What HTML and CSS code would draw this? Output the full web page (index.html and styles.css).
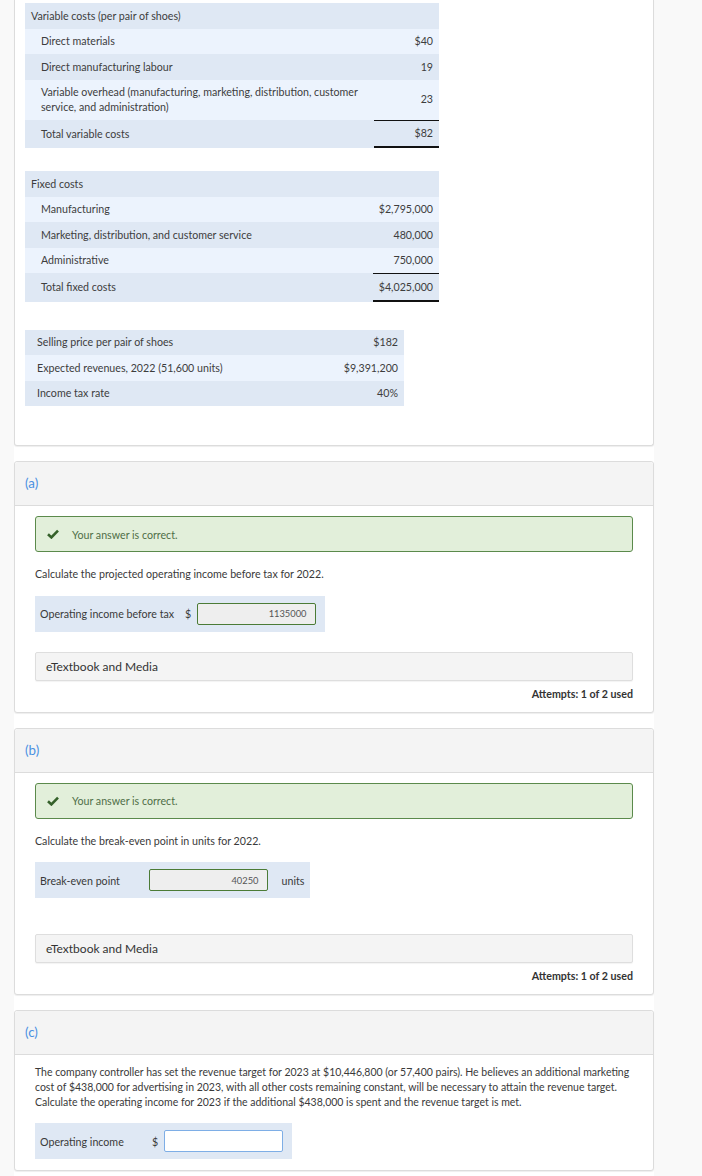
FILE: index.html
```html
<!DOCTYPE html>
<html lang="en">
<head>
<meta charset="utf-8">
<title>Cost-volume-profit question</title>
<link rel="stylesheet" href="styles.css">
</head>
<body>
<div class="column">
  <div class="card card-top">
    <table class="data t-var">
      <tr class="dark"><td class="head" colspan="2">Variable costs (per pair of shoes)</td></tr>
      <tr class="light"><td class="lbl">Direct materials</td><td class="val">$40</td></tr>
      <tr class="dark"><td class="lbl">Direct manufacturing labour</td><td class="val">19</td></tr>
      <tr class="light"><td class="lbl">Variable overhead (manufacturing, marketing, distribution, customer service, and administration)</td><td class="val">23</td></tr>
      <tr class="dark"><td class="lbl">Total variable costs</td><td class="val total">$82</td></tr>
    </table>

    <table class="data t-fixed">
      <tr class="dark"><td class="head" colspan="2">Fixed costs</td></tr>
      <tr class="light"><td class="lbl">Manufacturing</td><td class="val">$2,795,000</td></tr>
      <tr class="dark"><td class="lbl">Marketing, distribution, and customer service</td><td class="val">480,000</td></tr>
      <tr class="light"><td class="lbl">Administrative</td><td class="val">750,000</td></tr>
      <tr class="dark"><td class="lbl">Total fixed costs</td><td class="val total">$4,025,000</td></tr>
    </table>

    <table class="data t-info">
      <tr class="dark"><td class="lbl">Selling price per pair of shoes</td><td class="val">$182</td></tr>
      <tr class="light"><td class="lbl">Expected revenues, 2022 (51,600 units)</td><td class="val">$9,391,200</td></tr>
      <tr class="dark"><td class="lbl">Income tax rate</td><td class="val">40%</td></tr>
    </table>
  </div>

  <section class="card part">
    <div class="part-head">(a)</div>
    <div class="part-body">
      <div class="alert">
        <svg class="check" width="12" height="10" viewBox="0 0 12 10"><path d="M1 5.2 L4.4 8.4 L11 1.6" fill="none" stroke="#35612a" stroke-width="2.6" stroke-linejoin="miter"/></svg>
        <span>Your answer is correct.</span>
      </div>
      <p class="q">Calculate the projected operating income before tax for 2022.</p>
      <div class="answer">
        <span class="a-lbl w-a">Operating income before tax</span>
        <span class="cur">$</span>
        <input class="field done" type="text" value="1135000" readonly>
      </div>
      <div class="media">eTextbook and Media</div>
      <div class="attempts">Attempts: 1 of 2 used</div>
    </div>
  </section>

  <section class="card part">
    <div class="part-head">(b)</div>
    <div class="part-body">
      <div class="alert">
        <svg class="check" width="12" height="10" viewBox="0 0 12 10"><path d="M1 5.2 L4.4 8.4 L11 1.6" fill="none" stroke="#35612a" stroke-width="2.6" stroke-linejoin="miter"/></svg>
        <span>Your answer is correct.</span>
      </div>
      <p class="q">Calculate the break-even point in units for 2022.</p>
      <div class="answer">
        <span class="a-lbl w-b">Break-even point</span>
        <input class="field done" type="text" value="40250" readonly>
        <span class="unit">units</span>
      </div>
      <div class="media media-far">eTextbook and Media</div>
      <div class="attempts">Attempts: 1 of 2 used</div>
    </div>
  </section>

  <section class="card part">
    <div class="part-head">(c)</div>
    <div class="part-body">
      <p class="q para">The company controller has set the revenue target for 2023 at $10,446,800 (or 57,400 pairs). He believes an additional marketing cost of $438,000 for advertising in 2023, with all other costs remaining constant, will be necessary to attain the revenue target. Calculate the operating income for 2023 if the additional $438,000 is spent and the revenue target is met.</p>
      <div class="answer">
        <span class="a-lbl w-c">Operating income</span>
        <span class="cur">$</span>
        <input class="field open" type="text" value="">
      </div>
    </div>
  </section>
</div>
</body>
</html>
```

FILE: styles.css
```css
html, body {
  margin: 0;
  padding: 0;
}
body {
  background: #f9f9f9;
  font-family: Lato, "Open Sans", "Liberation Sans", sans-serif;
  color: #3a3a3a;
  font-size: 10.67px;
}
.column {
  width: 640px;
  margin-left: 14px;
  background: #fff;
  min-height: 1176px;
}
.card {
  border: 1px solid #dcdcdc;
  border-radius: 3px;
  background: #fff;
  box-shadow: 0 1px 1px rgba(0, 0, 0, 0.07);
  margin-bottom: 15px;
}
.card-top {
  border-top: none;
  border-radius: 0 0 3px 3px;
  padding: 3px 10px 39px 10px;
}

/* data tables */
.data {
  border-collapse: separate;
  border-spacing: 0;
  font-size: 10.67px;
  line-height: 14.5px;
  color: #3d3d3d;
}
.data td {
  padding: 5.5px 6px;
  vertical-align: middle;
}
.data tr.dark td { background: #dfe8f4; }
.data tr.light td { background: #ecf3fd; }
.data td.head { padding-left: 6px; }
.data td.lbl { padding-left: 16px; }
.data td.val {
  text-align: right;
  width: 53px;
  white-space: nowrap;
}
.data td.total {
  border-top: 1px solid #111;
  border-bottom: 2px solid #111;
}
.t-var { width: 414px; }
.t-fixed { width: 414px; margin-top: 23px; }
.t-info { width: 379px; margin-top: 28px; }
.t-info td.lbl { padding-left: 12px; }
.t-info td.val { width: auto; }

/* question parts */
.part-head {
  background: #f4f4f4;
  border-bottom: 1px solid #dcdcdc;
  padding: 11px 10px;
  line-height: 21px;
  font-size: 13.33px;
  color: #4a90e2;
  border-radius: 3px 3px 0 0;
}
.part-body {
  padding: 10px 20px 11px 20px;
}
.alert {
  display: flex;
  align-items: center;
  height: 34px;
  border: 1px solid #5b8a4b;
  border-radius: 3px;
  background: #e2efda;
  padding: 0 11px;
  color: #4f6e47;
  font-size: 10.67px;
}
.check {
  margin-right: 13px;
  flex: none;
}
.q {
  margin: 15px 0 0 0;
  line-height: 14.67px;
  font-size: 10.67px;
  color: #3a3a3a;
}
.para {
  margin-top: 0;
  font-size: 10.5px;
}
.answer {
  display: inline-flex;
  align-items: center;
  background: #dfe8f4;
  margin-top: 14px;
  padding: 7px 9px 7px 5px;
  font-size: 10.67px;
  color: #3a3a3a;
  vertical-align: top;
}
.a-lbl { flex: none; }
.w-a { width: 145px; }
.w-b { width: 108.5px; }
.w-c { width: 112px; }
.cur {
  width: 11.5px;
  flex: none;
}
.field {
  box-sizing: border-box;
  width: 119px;
  height: 22px;
  margin: 0;
  padding: 0 8px;
  font-family: Lato, "Open Sans", "Liberation Sans", sans-serif;
  font-size: 9.33px;
  text-align: right;
  color: #555;
  border-radius: 2px;
  outline: none;
}
.field.done {
  border: 1px solid #4b7b36;
  background: #eeeeee;
}
.field.open {
  border: 1px solid #7eaee6;
  background: #fff;
}
.unit {
  margin-left: 14px;
  margin-right: -3px;
}
.media {
  margin-top: 20px;
  height: 27px;
  line-height: 27px;
  border: 1px solid #dedede;
  border-radius: 2px;
  background: #f4f4f4;
  padding: 0 10px;
  font-size: 12px;
  color: #333;
  box-shadow: 0 1px 1px rgba(0, 0, 0, 0.05);
}
.media-far {
  margin-top: 36px;
}
.attempts {
  margin-top: 6px;
  text-align: right;
  font-weight: bold;
  font-size: 10.67px;
  line-height: 14px;
  color: #333;
}
```
